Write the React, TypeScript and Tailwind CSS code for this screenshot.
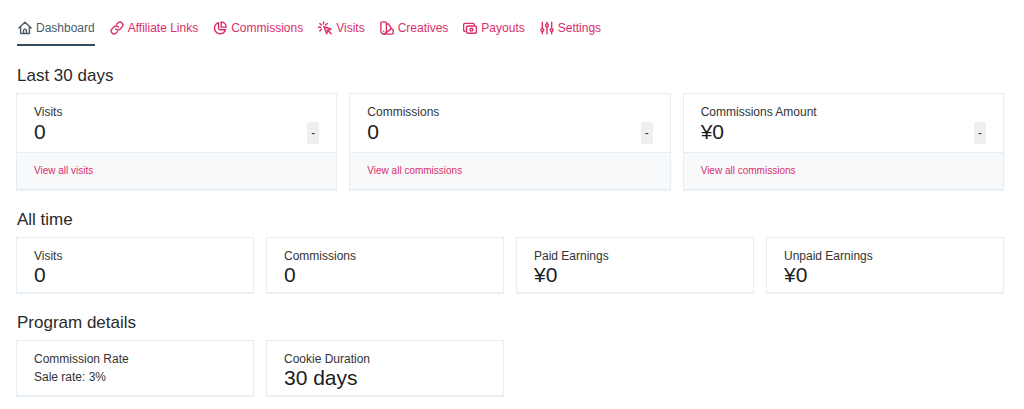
import React from "react";

type IconName = "home" | "link" | "pie" | "cursor" | "swatch" | "cash" | "sliders";

const iconPaths: Record<IconName, React.ReactNode> = {
  home: (
    <>
      <path d="M1.500 12 12 2.200 22.500 12" />
      <path d="M4.500 10v11.500h15V10" />
      <path d="M9.500 21v-4.500a2.500 2.500 0 0 1 5 0V21" />
    </>
  ),
  link: (
    <>
      <path d="M9.500 13.500a5 5 0 0 0 7.500.500l4-4a5 5 0 0 0-7-7l-2.500 2.500" />
      <path d="M14.500 10.500a5 5 0 0 0-7.500-.500l-4 4a5 5 0 0 0 7 7l2.500-2.500" />
    </>
  ),
  pie: (
    <>
      <path d="M9.500 2.800a9.700 9.700 0 1 0 12 12.200H12a2.500 2.500 0 0 1-2.500-2.500z" />
      <path d="M14 1.800v8.700h8.500a8.700 8.700 0 0 0-8.500-8.700z" />
    </>
  ),
  cursor: (
    <>
      <path d="m10 9.500 12.500 4.300-5.400 2.400-2.300 5.500z" fill="currentColor" fillOpacity="0.3" />
      <path d="m17 16 5.500 6M9.500 1.500v3.700M3.200 4.200l2.800 2.800M1 10.800h3.800M6 14.200l-2.800 2.900M15.800 4.200 13 7" />
    </>
  ),
  swatch: (
    <>
      <path d="M1.500 3.500A2 2 0 0 1 3.500 1.500h5.500A2 2 0 0 1 11 3.500v14a4.700 4.700 0 0 1-9.500 0z" />
      <path d="m11 6 1.500-.800a2 2 0 0 1 2.700.500l3.600 5.500a2 2 0 0 1-.500 2.700L9 21.500" />
      <path d="M18 13.500h2.500a2 2 0 0 1 2 2v5a2 2 0 0 1-2 2h-14" />
      <path d="M6.300 17.500h.01" />
    </>
  ),
  cash: (
    <>
      <rect x="6" y="8.500" width="17" height="12.500" rx="2.500" />
      <path d="M3.500 17.500A2.500 2.500 0 0 1 1 15V6.500A2.500 2.500 0 0 1 3.500 4H17a2.500 2.500 0 0 1 2.500 2" />
      <circle cx="14.500" cy="14.800" r="2.500" />
    </>
  ),
  sliders: (
    <>
      <path d="M4 2v11M4 18v4M12 2v3M12 10v12M20 2v11M20 18v4" />
      <circle cx="4" cy="15.500" r="2.500" />
      <circle cx="12" cy="7.500" r="2.500" />
      <circle cx="20" cy="15.500" r="2.500" />
    </>
  ),
};

function Icon({ name }: { name: IconName }) {
  return (
    <svg
      viewBox="0 0 24 24"
      className="size-3.5 shrink-0"
      fill="none"
      stroke="currentColor"
      strokeWidth="2.4"
      strokeLinecap="round"
      strokeLinejoin="round"
      aria-hidden="true"
    >
      {iconPaths[name]}
    </svg>
  );
}

const tabs: { label: string; icon: IconName }[] = [
  { label: "Dashboard", icon: "home" },
  { label: "Affiliate Links", icon: "link" },
  { label: "Commissions", icon: "pie" },
  { label: "Visits", icon: "cursor" },
  { label: "Creatives", icon: "swatch" },
  { label: "Payouts", icon: "cash" },
  { label: "Settings", icon: "sliders" },
];

const recent = [
  { label: "Visits", value: "0", link: "View all visits" },
  { label: "Commissions", value: "0", link: "View all commissions" },
  { label: "Commissions Amount", value: "¥0", link: "View all commissions" },
];

const totals = [
  { label: "Visits", value: "0" },
  { label: "Commissions", value: "0" },
  { label: "Paid Earnings", value: "¥0" },
  { label: "Unpaid Earnings", value: "¥0" },
];

const card = "border border-[#e6edf3] bg-white shadow-[0_1px_1px_#edf2f6]";

function Heading({ children }: { children: React.ReactNode }) {
  return <h2 className="mb-[5px] pl-px text-[17px] leading-6 text-[#2a2a2a]">{children}</h2>;
}

function StatCard({ label, value }: { label: string; value: string }) {
  return (
    <div className={`${card} px-[17px] pt-2.5 pb-[7px]`}>
      <p className="text-xs leading-4">{label}</p>
      <p className="text-[21px] leading-[21px] text-[#1d1d1d]">{value}</p>
    </div>
  );
}

export default function App() {
  return (
    <div className="pt-4 pr-5 pb-3 pl-4 font-['Liberation_Sans',Arial,sans-serif] text-[#333]">
      <nav className="flex flex-wrap gap-x-3.5 pl-px" aria-label="Affiliate area">
        {tabs.map((tab, i) => (
          <a
            key={tab.label}
            href="#"
            aria-current={i === 0 ? "page" : undefined}
            className={`flex items-center gap-1 border-b-2 pt-1 pb-2 pl-px text-xs leading-4 ${
              i === 0 ? "border-[#34495a] text-[#4a5b69]" : "border-transparent text-[#d92e6b]"
            }`}
          >
            <Icon name={tab.icon} />
            {tab.label}
          </a>
        ))}
      </nav>

      <main className="mt-[18px] flex flex-col gap-[18px]">
        <section>
          <Heading>Last 30 days</Heading>
          <div className="grid grid-cols-3 gap-3">
            {recent.map((item) => (
              <div key={item.label} className={card}>
                <div className="flex items-end justify-between px-[17px] pt-2.5 pb-2">
                  <div>
                    <p className="text-xs leading-4">{item.label}</p>
                    <p className="text-[21px] leading-6 text-[#1d1d1d]">{item.value}</p>
                  </div>
                  <span className="rounded-xs bg-[#efefef] px-1 text-xs leading-[22px]">-</span>
                </div>
                <div className="border-t border-[#e6edf3] bg-[#f7f9fb] px-[17px] py-2.5">
                  <a href="#" className="block text-[10px] leading-4 text-[#d92e6b]">
                    {item.link}
                  </a>
                </div>
              </div>
            ))}
          </div>
        </section>

        <section>
          <Heading>All time</Heading>
          <div className="grid grid-cols-4 gap-3">
            {totals.map((item) => (
              <StatCard key={item.label} {...item} />
            ))}
          </div>
        </section>

        <section>
          <Heading>Program details</Heading>
          <div className="grid grid-cols-4 gap-3">
            <div className={`${card} px-[17px] pt-2.5 pb-[7px]`}>
              <p className="text-xs leading-4">Commission Rate</p>
              <p className="text-xs leading-[21px]">Sale rate: 3%</p>
            </div>
            <StatCard label="Cookie Duration" value="30 days" />
          </div>
        </section>
      </main>
    </div>
  );
}
